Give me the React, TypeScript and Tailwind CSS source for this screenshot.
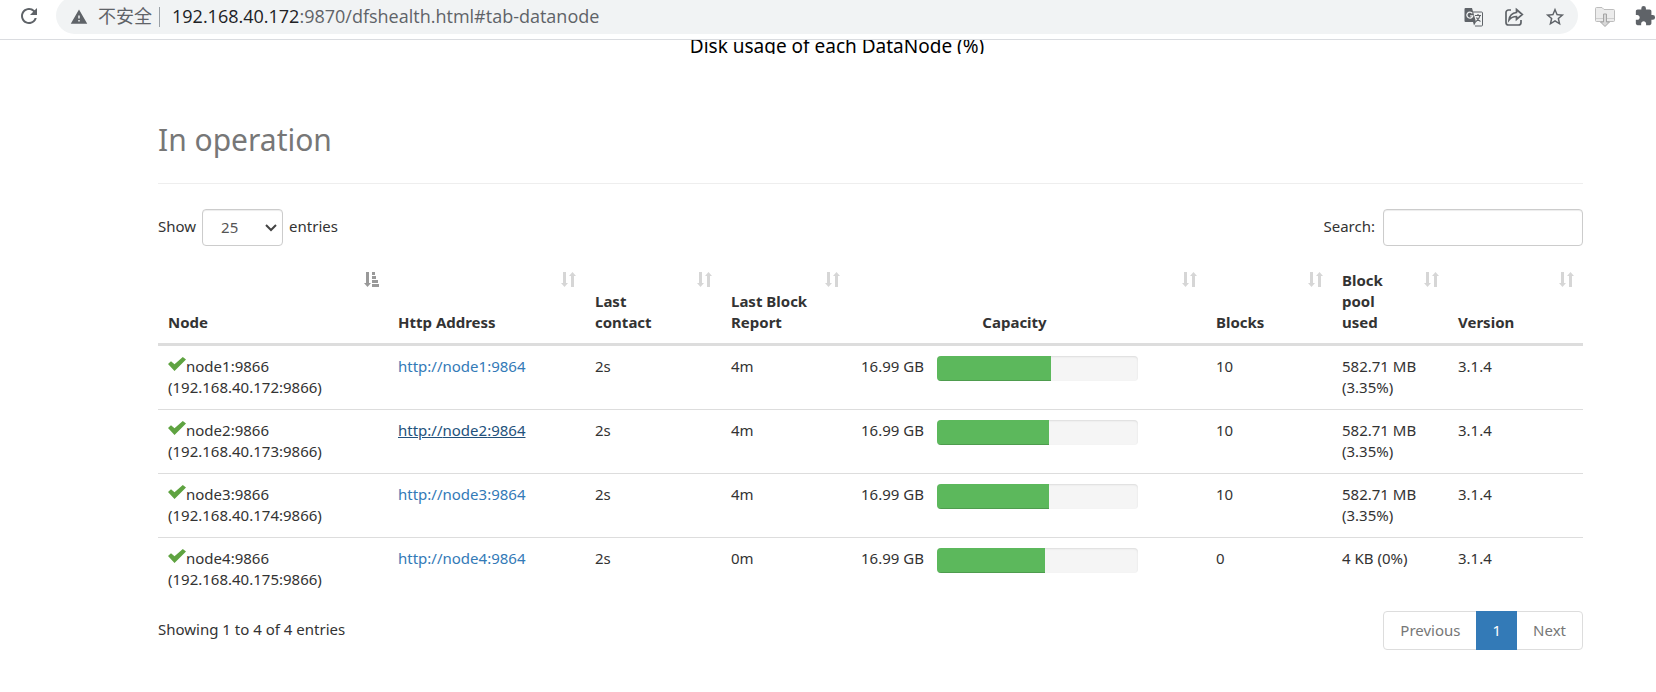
import type { ReactNode } from 'react'
import { MdRefresh, MdWarning, MdStarBorder, MdExtension } from 'react-icons/md'

type DataNode = {
  name: string
  ip: string
  lastContact: string
  blockReport: string
  capacity: string
  used: number
  blocks: number
  pool: string
  poolPercent: string
  version: string
  active?: boolean
}

const nodes: DataNode[] = [
  { name: 'node1', ip: '192.168.40.172', lastContact: '2s', blockReport: '4m', capacity: '16.99 GB', used: 56.7, blocks: 10, pool: '582.71 MB', poolPercent: '(3.35%)', version: '3.1.4' },
  { name: 'node2', ip: '192.168.40.173', lastContact: '2s', blockReport: '4m', capacity: '16.99 GB', used: 55.7, blocks: 10, pool: '582.71 MB', poolPercent: '(3.35%)', version: '3.1.4', active: true },
  { name: 'node3', ip: '192.168.40.174', lastContact: '2s', blockReport: '4m', capacity: '16.99 GB', used: 55.7, blocks: 10, pool: '582.71 MB', poolPercent: '(3.35%)', version: '3.1.4' },
  { name: 'node4', ip: '192.168.40.175', lastContact: '2s', blockReport: '0m', capacity: '16.99 GB', used: 53.7, blocks: 0, pool: '4 KB', poolPercent: '(0%)', version: '3.1.4' },
]

function SortIcon({ sorted }: { sorted?: boolean }) {
  if (sorted) {
    return (
      <svg viewBox="0 0 15 15" className="h-[15px] w-[15px] fill-[#999]" aria-hidden="true">
        <path d="M2 0h3v11h2l-3.5 4L0 11h2zM8 0h3v3H8zM8 4h4v3H8zM8 8h6v3H8zM8 12h7v3H8z" />
      </svg>
    )
  }
  return (
    <svg viewBox="0 0 15 15" className="h-[15px] w-[15px] fill-[#d6d6d6]" aria-hidden="true">
      <path d="M2 0h3v11h2l-3.5 4L0 11h2zM11.500 0L15 4h-2v11h-3V4H8z" />
    </svg>
  )
}

function CheckIcon() {
  return (
    <svg viewBox="0 0 18 15" className="inline-block h-[15px] w-[18px] fill-[#5fa341] align-baseline" aria-hidden="true">
      <path d="M0 7L3 4.300l3.500 3L14.800 0 18 2.500 6.500 14z" />
    </svg>
  )
}

function TranslateIcon() {
  return (
    <svg viewBox="0 0 20 20" className="size-5" aria-hidden="true">
      <path d="M9 5h8.500a1 1 0 0 1 1 1v12a1 1 0 0 1-1 1H11" className="fill-none stroke-current" />
      <path d="M1.500 1H8l4 14H1.500a1 1 0 0 1-1-1V2a1 1 0 0 1 1-1z" className="fill-current" />
      <path d="M8.300 6.300A3 3 0 1 0 8.800 8.800H6.200" className="fill-none stroke-[#f1f3f4]" strokeWidth="1.300" />
      <path d="M11 8.500h6M14 7v1.500M16 8.500c-.5 2.500-2 4.500-4 6M12.500 10.500c.8 1.800 2.200 3.200 4 4" className="fill-none stroke-current" strokeWidth="1.200" />
      <path d="M9 15h3l-2 3.500z" className="fill-current" />
    </svg>
  )
}

function HeaderCell({ children, width, center, sorted }: { children: ReactNode, width: string, center?: boolean, sorted?: boolean }) {
  return (
    <th className={`${width} relative border-b-3 border-[#ddd] pt-[6px] pr-9 pb-[10px] pl-[10px] align-bottom font-bold ${center ? 'text-center' : 'text-left'}`}>
      {children}
      <button type="button" aria-label="Sort" className="absolute top-2 right-[9px]">
        <SortIcon sorted={sorted} />
      </button>
    </th>
  )
}

function BrowserBar() {
  return (
    <header className="flex h-10 items-start overflow-hidden border-b border-[#dadce0] text-[#5f6368]">
      <button type="button" aria-label="Reload" className="mt-1 ml-[17px] shrink-0">
        <MdRefresh className="size-6" />
      </button>
      <div className="-mt-[3px] ml-[15px] flex h-[37px] min-w-0 flex-1 items-center rounded-full bg-[#f1f3f4] pr-3 pl-[14px]">
        <MdWarning className="mt-[2px] size-[18px] shrink-0" />
        <span className="ml-[10px] text-[18px] leading-7 whitespace-nowrap">不安全</span>
        <span className="mt-[2px] mr-3 ml-[7px] h-5 w-px bg-[#9aa0a6]" />
        <span className="flex-1 font-['Open_Sans',sans-serif] text-[18px] leading-7 whitespace-nowrap">
          <span className="text-[#202124]">192.168.40.172</span>:9870/dfshealth.html#tab-datanode
        </span>
        <div className="mt-[2px] flex items-center gap-5">
          <button type="button" aria-label="Translate"><TranslateIcon /></button>
          <button type="button" aria-label="Share">
            <svg viewBox="0 0 20 20" className="size-5 fill-none stroke-current" strokeWidth="1.700" aria-hidden="true">
              <path d="M7 3H4.500A2.500 2.500 0 0 0 2 5.500v10A2.500 2.500 0 0 0 4.500 18h10a2.500 2.500 0 0 0 2.500-2.500V13" />
              <path d="M12.500 2.500L18.300 7.500l-5.800 5V9.500C9 9.500 7 10.500 5 13c.500-4 3-7 7.500-7.500z" />
            </svg>
          </button>
          <button type="button" aria-label="Bookmark"><MdStarBorder className="size-[22px]" /></button>
        </div>
      </div>
      <div className="mt-[5px] ml-4 flex shrink-0 items-center gap-[18px]">
        <button type="button" aria-label="Downloads">
          <svg viewBox="0 0 22 22" className="size-[22px]" aria-hidden="true">
            <path d="M1.500 3.500q0-1 1-1H8l2 2h9.500q1 0 1 1v10q0 1-1 1h-17q-1 0-1-1z" fill="#ececec" stroke="#bdbdbd" />
            <path d="M2 13.500h18" stroke="#cfcfcf" />
            <path d="M9.500 9h3v8h3L11 21.500 6.500 17h3z" fill="#d8d8d8" stroke="#a5a5a5" />
          </svg>
        </button>
        <button type="button" aria-label="Extensions"><MdExtension className="size-[22px]" /></button>
      </div>
    </header>
  )
}

export default function App() {
  return (
    <div className="bg-white font-['Noto_Sans','Noto_Sans_CJK_SC',sans-serif] text-[15px] leading-[21px] text-[#333]">
      <BrowserBar />
      <main className="pr-[73px] pl-[158px]">
        {/* bottom of the usage histogram, scrolled under the bar */}
        <div className="flex h-[14px] items-end justify-center overflow-hidden pr-[67px]">
          <p className="text-[19px] leading-4 text-black">Disk usage of each DataNode (%)</p>
        </div>

        <h1 className="mt-[68px] border-b border-[#eee] pb-[25px] text-[30px] leading-9 text-[#777]">In operation</h1>

        <div className="mt-[25px] flex items-center justify-between">
          <label className="flex items-center gap-[6px]">
            <span className="pb-[2px]">Show</span>
            <span className="relative">
              <select defaultValue="25" className="h-[37px] w-[81px] appearance-none rounded border border-[#ccc] bg-white pl-[18px] text-[#555] shadow-[inset_0_1px_1px_rgba(0,0,0,0.075)]">
                <option>10</option>
                <option>25</option>
                <option>50</option>
                <option>100</option>
              </select>
              <svg viewBox="0 0 12 8" className="pointer-events-none absolute top-[15px] right-[6px] h-2 w-3 fill-none stroke-[#444]" strokeWidth="2" aria-hidden="true">
                <path d="M1 1l5 5 5-5" />
              </svg>
            </span>
            <span className="pb-[2px]">entries</span>
          </label>
          <label className="flex items-center gap-2">
            <span className="pb-[2px]">Search:</span>
            <input type="search" className="h-[37px] w-[200px] rounded border border-[#ccc] px-3 shadow-[inset_0_1px_1px_rgba(0,0,0,0.075)]" />
          </label>
        </div>

        <table className="mt-[18px] w-full table-fixed border-separate border-spacing-0">
          <thead>
            <tr>
              <HeaderCell width="w-[230px]" sorted>Node</HeaderCell>
              <HeaderCell width="w-[197px]">Http Address</HeaderCell>
              <HeaderCell width="w-[136px]">Last contact</HeaderCell>
              <HeaderCell width="w-[128px]">Last Block Report</HeaderCell>
              <HeaderCell width="w-auto" center>Capacity</HeaderCell>
              <HeaderCell width="w-[126px]">Blocks</HeaderCell>
              <HeaderCell width="w-[116px]">Block pool used</HeaderCell>
              <HeaderCell width="w-[135px]">Version</HeaderCell>
            </tr>
          </thead>
          <tbody className="[&_td]:px-[10px] [&_td]:pt-[10px] [&_td]:pb-[11px] [&_td]:align-top [&_tr:not(:last-child)_td]:border-b [&_tr:not(:last-child)_td]:border-[#ddd]">
            {nodes.map((node) => (
              <tr key={node.name}>
                <td>
                  <CheckIcon />{node.name}:9866
                  <br />
                  ({node.ip}:9866)
                </td>
                <td>
                  <a href={`http://${node.name}:9864`} className={node.active ? 'text-[#23527c] underline' : 'text-[#337ab7]'}>
                    http://{node.name}:9864
                  </a>
                </td>
                <td>{node.lastContact}</td>
                <td>{node.blockReport}</td>
                <td>
                  <div className="flex items-start">
                    <span className="w-[78px] pl-[2px] whitespace-nowrap">{node.capacity}</span>
                    <div className="h-[25px] w-[201px] overflow-hidden rounded bg-[#f5f5f5] shadow-[inset_0_1px_2px_rgba(0,0,0,0.1)]">
                      <div className="h-full bg-[#5cb85c] shadow-[inset_0_-1px_0_rgba(0,0,0,0.15)]" style={{ width: `${node.used}%` }} />
                    </div>
                  </div>
                </td>
                <td>{node.blocks}</td>
                <td>{node.pool} {node.poolPercent}</td>
                <td>{node.version}</td>
              </tr>
            ))}
          </tbody>
        </table>

        <div className="mt-[10px] flex items-start justify-between pb-10">
          <p className="pt-2">Showing 1 to 4 of 4 entries</p>
          <nav className="flex h-[39px] rounded border border-[#ddd] text-[#777]">
            <button type="button" className="px-4">Previous</button>
            <button type="button" className="-my-px bg-[#337ab7] px-4 text-white">1</button>
            <button type="button" className="px-4">Next</button>
          </nav>
        </div>
      </main>
    </div>
  )
}
